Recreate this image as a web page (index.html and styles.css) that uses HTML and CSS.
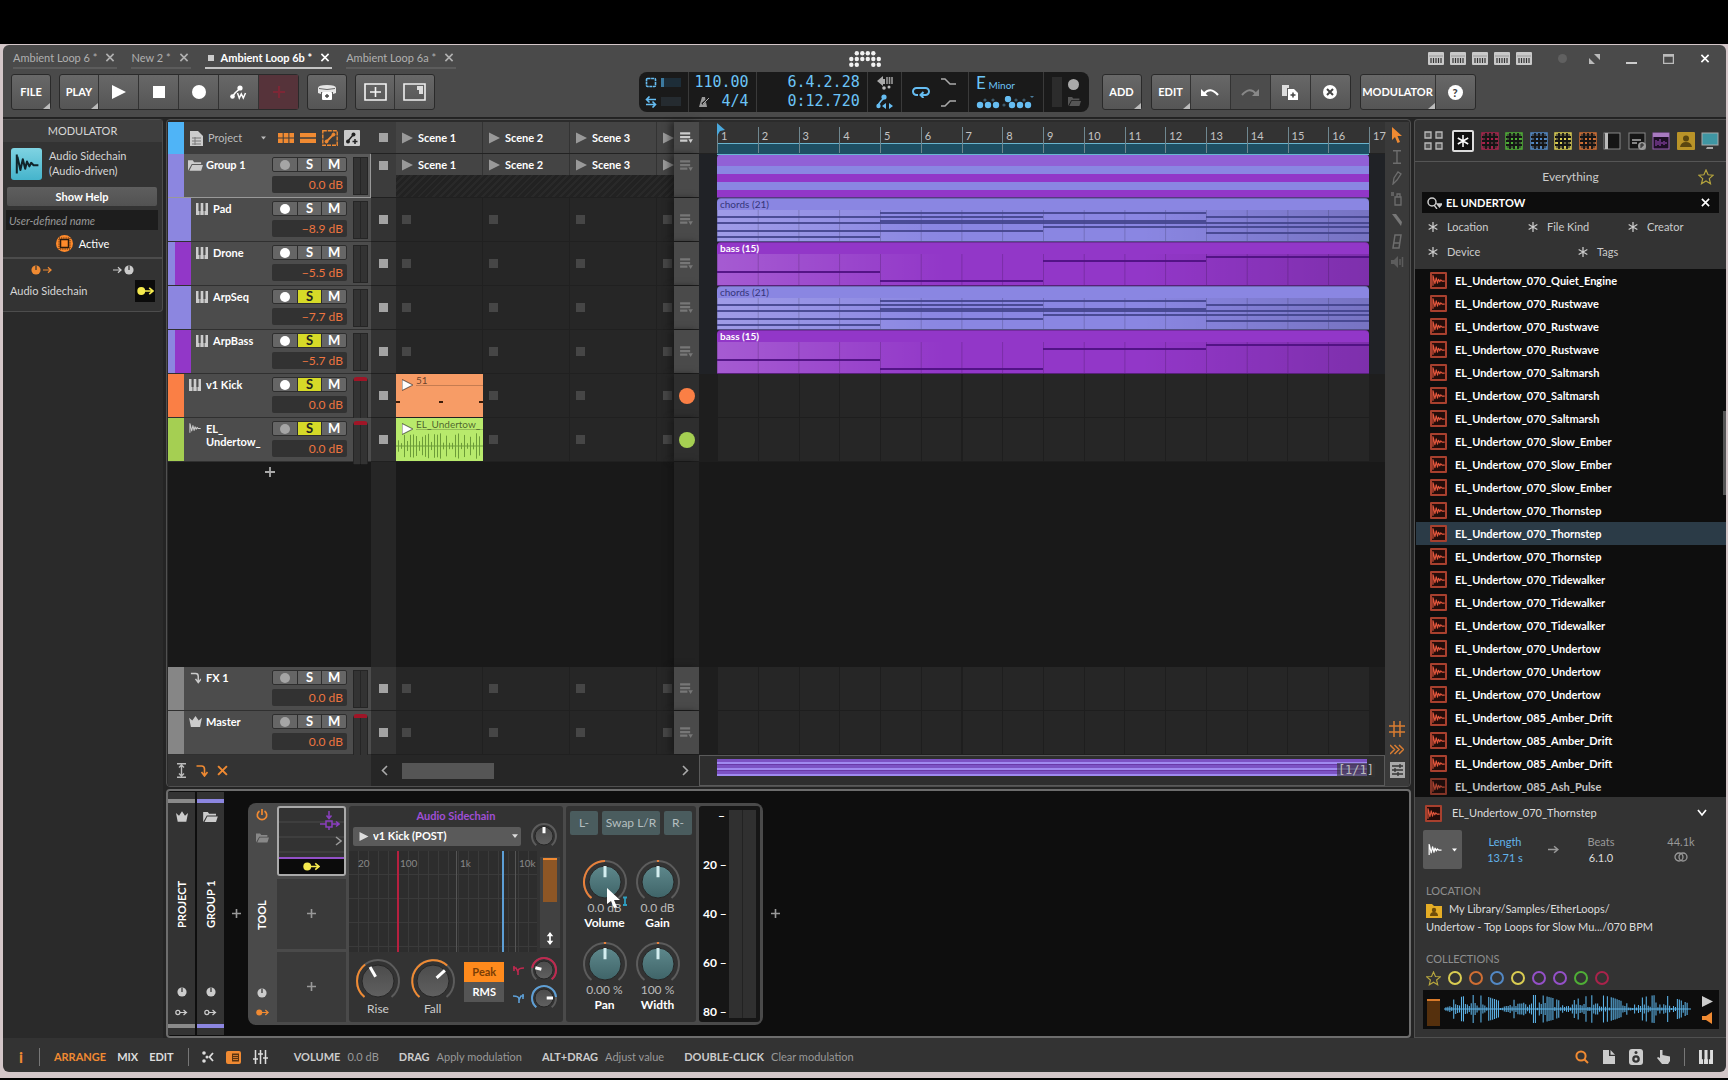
FILE: index.html
```html
<!DOCTYPE html>
<html lang="en">
<head>
<meta charset="utf-8">
<title>Ambient Loop 6b</title>
<link rel="stylesheet" href="styles.css">
</head>
<body>
<svg class="defs" aria-hidden="true">
  <symbol id="i-x" viewBox="0 0 10 10"><path d="M1 1l8 8M9 1L1 9" fill="none" stroke="currentColor" stroke-width="1.8"/></symbol>
  <symbol id="i-play" viewBox="0 0 10 10"><path d="M0 0l10 5-10 5z" fill="currentColor"/></symbol>
  <symbol id="i-plus" viewBox="0 0 10 10"><path d="M5 0v10M0 5h10" fill="none" stroke="currentColor" stroke-width="1.8"/></symbol>
  <symbol id="i-keys" viewBox="0 0 12 12"><path d="M0 0h2.500v8h-2.500zM4.700 0h2.600v8H4.700zM9.500 0H12v8H9.500zM0 8h3.500v4H0zM4.300 8h3.400v4H4.300zM8.500 8H12v4H8.500z" fill="currentColor"/></symbol>
  <symbol id="i-midi" viewBox="0 0 16 13"><rect width="16" height="13" rx="1" fill="#c9c9c9"/><path d="M3 6v5M5.500 6v5M8 6v5M10.500 6v5M13 6v5" stroke="#333" stroke-width="1.200"/><path d="M1 4h14" stroke="#999"/></symbol>
  <symbol id="i-wave" viewBox="0 0 20 16"><path d="M1.500 0v16M2 2l2.500 11L6.500 4l2 8 1.500-6 2 4 1.500-3 2 2h4" fill="none" stroke="currentColor" stroke-width="1.700" stroke-linejoin="round"/></symbol>
  <symbol id="i-folder" viewBox="0 0 16 12"><path d="M0 12V1h5l1.500 2H14v2H4z M1.500 12L4.500 6H16l-2 6z" fill="currentColor"/></symbol>
  <symbol id="i-crown" viewBox="0 0 14 12"><path d="M0 2l3.500 3L7 0l3.500 5L14 2l-2 10H2z" fill="currentColor"/></symbol>
  <symbol id="i-send" viewBox="0 0 12 12"><path d="M1 1h5q3 0 3 3v6M6 7l3 4 3-4" fill="none" stroke="currentColor" stroke-width="1.600"/></symbol>
  <symbol id="i-list" viewBox="0 0 14 12"><path d="M0 1.500h11M0 5.500h11M0 9.500h8" stroke="currentColor" stroke-width="2.400"/><path d="M9 8h5l-2.500 4z" fill="currentColor"/></symbol>
  <symbol id="i-route" viewBox="0 0 16 8"><circle cx="4" cy="4" r="3.700" fill="currentColor"/><path d="M7 4h8M11.500 1l3.500 3-3.500 3" fill="none" stroke="currentColor" stroke-width="1.500"/></symbol>
  <symbol id="i-route-open" viewBox="0 0 16 8"><circle cx="3.500" cy="4" r="2.500" fill="none" stroke="currentColor" stroke-width="1.500"/><path d="M6 4h9M10.500 1l3.500 3-3.500 3" fill="none" stroke="currentColor" stroke-width="1.500"/></symbol>
  <symbol id="i-dial" viewBox="0 0 12 12"><circle cx="6" cy="6" r="5.500" fill="currentColor"/><path d="M6 1v5" stroke="#333" stroke-width="1.500"/></symbol>
  <symbol id="i-arrow" viewBox="0 0 10 8"><path d="M0 4h9M5.500 1L9 4 5.500 7" fill="none" stroke="currentColor" stroke-width="1.300"/></symbol>
  <symbol id="i-ast" viewBox="0 0 12 12"><path d="M6 0v12M.8 3l10.400 6M.8 9l10.400-6" stroke="currentColor" stroke-width="1.500"/></symbol>
  <symbol id="i-star" viewBox="0 0 16 16"><path d="M8 1l2.100 4.800 5.100.4-3.900 3.400 1.200 5.100L8 12l-4.500 2.700 1.200-5.100L.8 6.200l5.100-.4z" fill="none" stroke="currentColor" stroke-width="1.200"/></symbol>
  <symbol id="i-caret" viewBox="0 0 8 5"><path d="M0 0h8L4 5z" fill="currentColor"/></symbol>
  <symbol id="i-grid" viewBox="0 0 18 18"><rect x="1" y="1" width="16" height="16" fill="currentColor" fill-opacity=".3" stroke="currentColor" stroke-width="1.500"/><path d="M5 1v16M9 1v16M13 1v16M1 5h16M1 9h16M1 13h16" stroke="#151515" stroke-width="1.800"/><g fill="currentColor"><rect x="6" y="6" width="2" height="2"/><rect x="10" y="6" width="2" height="2"/><rect x="6" y="10" width="2" height="2"/><rect x="14" y="6" width="2" height="2"/><rect x="10" y="14" width="2" height="2"/><rect x="2" y="10" width="2" height="2"/></g></symbol>
  <symbol id="i-power" viewBox="0 0 12 12"><path d="M6 0v6M3.500 2a4.700 4.700 0 1 0 5 0" fill="none" stroke="currentColor" stroke-width="1.700"/></symbol>
  <symbol id="i-updown" viewBox="0 0 8 14"><path d="M4 3v8" stroke="currentColor" stroke-width="1.800"/><path d="M4 0L.5 4.500h7zM4 14L.5 9.500h7z" fill="currentColor"/></symbol>
</svg>

<div class="app">
  <header class="tabs">
    <nav class="tab-list" aria-label="Projects">
      <div class="tab"><a href="#">Ambient Loop 6 *</a><button aria-label="Close"><svg width="10" height="9"><use href="#i-x"/></svg></button></div>
      <div class="tab"><a href="#">New 2 *</a><button aria-label="Close"><svg width="10" height="9"><use href="#i-x"/></svg></button></div>
      <div class="tab active"><i class="dirty"></i><a href="#">Ambient Loop 6b *</a><button aria-label="Close"><svg width="10" height="9"><use href="#i-x"/></svg></button></div>
      <div class="tab"><a href="#">Ambient Loop 6a *</a><button aria-label="Close"><svg width="10" height="9"><use href="#i-x"/></svg></button></div>
    </nav>
    <svg class="logo" width="32" height="16" viewBox="0 0 32 16" fill="#f2f2f2"><g id="logo-dots"></g></svg>
    <div class="win">
      <div class="midi"><svg width="16" height="13"><use href="#i-midi"/></svg><svg width="16" height="13"><use href="#i-midi"/></svg><svg width="16" height="13"><use href="#i-midi"/></svg><svg width="16" height="13"><use href="#i-midi"/></svg><svg width="16" height="13"><use href="#i-midi"/></svg></div>
      <i class="led"></i>
      <button aria-label="Full screen"><svg width="11" height="10" viewBox="0 0 11 10" fill="#bbb"><path d="M5 0h6v6zM0 4v6h6z"/></svg></button>
      <button aria-label="Minimize"><svg width="11" height="10" viewBox="0 0 11 10"><path d="M0 9h11" stroke="#ccc" stroke-width="2"/></svg></button>
      <button aria-label="Maximize"><svg width="11" height="10" viewBox="0 0 11 10" fill="none" stroke="#bbb"><path d="M.5.5h10v9H.5zM0 2h11" stroke-width="1.500"/></svg></button>
      <button aria-label="Close window" class="white"><svg width="10" height="9"><use href="#i-x"/></svg></button>
    </div>
  </header>

  <div class="toolbar">
    <div class="tools-left">
      <div class="bgroup"><button class="menu">FILE</button></div>
      <div class="bgroup">
        <button class="menu">PLAY</button>
        <button aria-label="Play"><svg width="14" height="14"><use href="#i-play"/></svg></button>
        <button aria-label="Stop"><svg width="12" height="12"><rect width="12" height="12" fill="#fff"/></svg></button>
        <button aria-label="Record"><svg width="14" height="14"><circle cx="7" cy="7" r="7" fill="#fff"/></svg></button>
        <button aria-label="Automation write"><svg width="17" height="15" viewBox="0 0 17 15"><path d="M2.500 11.500L5 8l5-4.500" fill="none" stroke="#fff" stroke-width="1.600"/><circle cx="2.500" cy="11.500" r="2.300" fill="#fff"/><circle cx="10" cy="3" r="2.600" fill="#fff"/><path d="M7.500 8l1.800 5 2-4 2 4L15.500 8" fill="none" stroke="#fff" stroke-width="1.500"/></svg></button>
        <button class="overdub" aria-label="Overdub"><svg width="12" height="12"><use href="#i-plus"/></svg></button>
      </div>
      <div class="bgroup"><button aria-label="Save"><svg width="20" height="17" viewBox="0 0 20 17"><path d="M1 4q0-3 9-3t9 3v5l-3 1V8H4v2L1 9z" fill="#e6e6e6"/><path d="M2 4.500q8 2 16 0" stroke="#666" fill="none"/><rect x="5" y="8" width="10" height="8" rx="1" fill="#fff"/><path d="M10 10v4M8 12h4" stroke="#444" stroke-width="1.300"/></svg></button></div>
      <div class="bgroup">
        <button aria-label="Add panel"><svg width="23" height="18" viewBox="0 0 23 18" fill="none" stroke="#f4f4f4" stroke-width="1.600"><path d="M1 1h21v16H1zM11.500 4v10M6 9h11"/></svg></button>
        <button aria-label="Panel layout"><svg width="23" height="18" viewBox="0 0 23 18" fill="none" stroke="#eee" stroke-width="1.600"><path d="M1 1h21v16H1z"/><path d="M14 3h6v8h-4V7h-2z" fill="#ddd" stroke="none"/></svg></button>
      </div>
    </div>

    <section class="transport" aria-label="Transport">
      <div class="cell t-io">
        <span><svg width="12" height="11" viewBox="0 0 12 11"><rect x="1.500" y="1.500" width="9" height="8" rx="1" fill="none" stroke="#66bdf2" stroke-width="1.600" stroke-dasharray="3 .6"/></svg><i class="bar"></i></span>
        <span><svg width="12" height="12" viewBox="0 0 12 12" fill="none" stroke="#66bdf2" stroke-width="1.600"><path d="M1 3.500h10M4.500.5L1.500 3.500l3 3M11 8.500H1M7.500 5.500l3 3-3 3"/></svg><i class="bar off"></i></span>
      </div>
      <div class="cell t-tempo"><b>110.00</b><b><svg width="11" height="10" viewBox="0 0 11 10"><path d="M3 0h3l2 10H0z" fill="#9a9a9a"/><path d="M3 7l7-6" stroke="#1a1a1a" stroke-width="2"/><path d="M4 7l6-6" stroke="#aaa"/></svg>4/4</b></div>
      <div class="cell t-pos"><b>6.4.2.28</b><b>0:12.720</b></div>
      <div class="cell t-follow">
        <svg width="16" height="14" viewBox="0 0 16 14"><path d="M0 5l6-5v10zM6 3h2v5H6z" fill="#aaa"/><path d="M10 1v7M12.500 1v7M15 1v7" stroke="#999" stroke-width="1.600"/><circle cx="7" cy="12" r="1.800" fill="#bbb"/><circle cx="12" cy="11" r="1.500" fill="#bbb"/></svg>
        <svg width="17" height="15" viewBox="0 0 17 15" fill="#66bdf2"><path d="M2 11l3-4 4-4" stroke="#66bdf2" stroke-width="1.600" fill="none"/><circle cx="2.500" cy="12" r="2.200"/><circle cx="8" cy="3" r="2.600"/><path d="M6 12l4-3v6zM17 12l-4-3v6z"/></svg>
      </div>
      <div class="cell t-loop">
        <svg width="18" height="12" viewBox="0 0 18 12" fill="none" stroke="#66bdf2" stroke-width="2"><path d="M6 9H4.500a3.500 3.500 0 0 1 0-7h9a3.500 3.500 0 0 1 0 7H9M11.500 6L8.500 9l3 3"/></svg>
        <div><svg width="15" height="8" viewBox="0 0 15 8" fill="none" stroke="#aaa" stroke-width="1.500"><path d="M0 1h4l5 5h6"/></svg><svg width="15" height="8" viewBox="0 0 15 8" fill="none" stroke="#aaa" stroke-width="1.500"><path d="M0 7h4l5-5h6"/></svg></div>
      </div>
      <div class="cell t-key"><p><strong>E</strong> Minor</p><svg width="58" height="13" viewBox="0 0 58 13"><g id="scale-dots"></g><path d="M54 0h4l-2 2z" fill="#4a7c9c"/></svg></div>
      <div class="cell t-cpu"><i></i><div><em></em><svg width="13" height="10"><use href="#i-folder"/></svg></div></div>
    </section>

    <div class="tools-right">
      <div class="bgroup"><button class="menu">ADD</button></div>
      <div class="bgroup">
        <button class="menu">EDIT</button>
        <button aria-label="Undo"><svg width="18" height="12" viewBox="0 0 18 12"><path d="M3 8q6-8 14 1" fill="none" stroke="#fff" stroke-width="2.200"/><path d="M0 3v7h7z" fill="#fff"/></svg></button>
        <button class="dim" aria-label="Redo"><svg width="18" height="12" viewBox="0 0 18 12"><path d="M15 8Q9 0 1 9" fill="none" stroke="#888" stroke-width="2"/><path d="M18 3v7h-7z" fill="#888"/></svg></button>
        <button aria-label="Duplicate"><svg width="16" height="15" viewBox="0 0 16 15"><path d="M0 0h7v3H5v8H0z" fill="#ddd"/><path d="M6 4h6l4 4v7H6z" fill="#fff"/><path d="M11 7.500v5M8.500 10h5" stroke="#444" stroke-width="1.500"/></svg></button>
        <button aria-label="Delete"><svg width="14" height="14" viewBox="0 0 14 14"><circle cx="7" cy="7" r="7" fill="#fff"/><path d="M4 4l6 6M10 4l-6 6" stroke="#444" stroke-width="2"/></svg></button>
      </div>
      <div class="bgroup"><button class="menu wide">MODULATOR</button><button class="help" aria-label="Help"><span>?</span></button></div>
    </div>
  </div>

  <main class="workspace">
    <aside class="left">
      <section class="inspector">
        <h2>MODULATOR</h2>
        <div class="mod-head"><span class="mod-icon"><svg width="24" height="22"><use href="#i-wave"/></svg></span><p>Audio Sidechain<br>(Audio-driven)</p></div>
        <button class="show-help">Show Help</button>
        <input class="user-name" type="text" placeholder="User-defined name" aria-label="User-defined name">
        <button class="active-btn"><svg width="17" height="17" viewBox="0 0 17 17"><circle cx="8.500" cy="8.500" r="8.500" fill="#ff8a2b"/><rect x="4.500" y="4.500" width="8" height="8" fill="#ff8a2b" stroke="#2b1a0c" stroke-width="1.500"/><rect x="3" y="3" width="11" height="11" fill="none" stroke="#2b1a0c" stroke-dasharray="1 1.200"/></svg>Active</button>
        <div class="mod-io"><span class="or"><svg width="10" height="10"><use href="#i-dial"/></svg><svg width="9" height="8"><use href="#i-arrow"/></svg></span><span><svg width="9" height="8"><use href="#i-arrow"/></svg><svg width="10" height="10"><use href="#i-dial"/></svg></span></div>
        <div class="mod-src"><span>Audio Sidechain</span><button aria-label="Route"><svg width="17" height="10"><use href="#i-route"/></svg></button></div>
      </section>
    </aside>

    <div class="center">
      <section class="arrange" aria-label="Arranger">
        <div class="heads" id="heads">
          <div class="head-top">
            <i class="swatch"></i>
            <svg width="13" height="15" viewBox="0 0 13 15"><path d="M0 0h8l5 5v10H0z" fill="#ccc"/><path d="M2 7h9M2 10h9M2 13h9M5 6v8" stroke="#777"/></svg>
            <button class="proj">Project</button><svg class="dim" width="5" height="4"><use href="#i-caret"/></svg>
            <span class="views">
              <svg width="16" height="10" viewBox="0 0 16 10" fill="#f08a32"><path d="M0 0h4.700v4.500H0zM5.700 0h4.700v4.500H5.700zM11.400 0h4.600v4.500h-4.600zM0 5.500h4.700V10H0zM5.700 5.500h4.700V10H5.700zM11.400 5.500h4.600V10h-4.600z"/></svg>
              <svg width="16" height="10" viewBox="0 0 16 10" fill="#f08a32"><path d="M0 0h16v4.300H0zM0 5.700h16V10H0z"/></svg>
              <svg width="16" height="16" viewBox="0 0 16 16" fill="none" stroke="#f08a32"><rect x=".8" y=".8" width="14.400" height="14.400" stroke-width="1.400" stroke-dasharray="4 1"/><path d="M4 12l7-7" stroke-width="1.800"/><circle cx="4.500" cy="11.500" r="1.500" fill="#f08a32"/><circle cx="11.500" cy="4.500" r="1.500" fill="#f08a32"/></svg>
              <svg width="16" height="16" viewBox="0 0 16 16"><rect width="16" height="16" rx="1" fill="#ccc"/><path d="M4 11l5-6M11 9v5M8.500 11.500h5" stroke="#222" stroke-width="1.500"/><circle cx="4" cy="11.500" r="2" fill="#222"/><circle cx="9.500" cy="4.500" r="2" fill="#222"/></svg>
            </span>
          </div>
        </div>
        <div class="launcher" id="launcher"></div>
        <div class="timeline" id="timeline"></div>
        <div class="edit-tools">
          <svg width="12" height="16" viewBox="0 0 12 16"><path d="M1 0v13l3-3 2.500 6L9 15 6.500 9H11z" fill="#f08a32"/></svg>
          <svg width="8" height="14" viewBox="0 0 8 14"><path d="M0 .7h8M0 13.300h8M4 1v12" stroke="#6d6d6d" stroke-width="1.400"/></svg>
          <svg width="10" height="14" viewBox="0 0 10 14"><path d="M1 13l1-6 4-6 3 2-4 6z" fill="none" stroke="#6d6d6d" stroke-width="1.300"/></svg>
          <svg width="12" height="14" viewBox="0 0 12 14"><path d="M4 5h6v8H4zM6 5V2h3v3M0 1h3M0 3h3" fill="none" stroke="#6d6d6d" stroke-width="1.300"/></svg>
          <svg width="12" height="14" viewBox="0 0 12 14"><path d="M1 1l4 0 6 8-1 4z" fill="#777"/></svg>
          <svg width="10" height="15" viewBox="0 0 10 15"><path d="M3 1h6l-2 13H1zM2 9h6" fill="none" stroke="#6d6d6d" stroke-width="1.500"/></svg>
          <svg width="13" height="12" viewBox="0 0 13 12"><path d="M0 4h3l4-4v12L3 8H0z" fill="#5c5c5c"/><path d="M9 3v6M11.500 1v10" stroke="#5c5c5c" stroke-width="1.500"/></svg>
          <span class="spacer"></span>
          <svg width="16" height="16" viewBox="0 0 16 16"><path d="M5 0v16M11 0v16M0 5h16M0 11h16" stroke="#d97d32" stroke-width="1.500"/></svg>
          <svg width="14" height="11" viewBox="0 0 14 11"><path d="M0 1l4.500 4.500L0 10M4.500 1L9 5.500 4.500 10M9 1l4.500 4.500L9 10" fill="none" stroke="#d97d32" stroke-width="1.500"/></svg>
          <svg width="15" height="16" viewBox="0 0 15 16"><rect width="15" height="16" fill="#a9a9a9"/><path d="M2 4h11M2 8h11M2 12h11M10 2v4M5 6v4M8 10v4" stroke="#333" stroke-width="1.300"/></svg>
        </div>
      </section>

      <section class="devices" aria-label="Devices">
        <div class="strip grey"><svg width="12" height="11"><use href="#i-crown"/></svg><b>PROJECT</b><svg width="10" height="10"><use href="#i-dial"/></svg><svg width="13" height="7"><use href="#i-route-open"/></svg></div>
        <div class="strip lilac"><svg width="15" height="11"><use href="#i-folder"/></svg><b>GROUP 1</b><svg width="10" height="10"><use href="#i-dial"/></svg><svg width="13" height="7"><use href="#i-route-open"/></svg></div>
        <button class="add" aria-label="Insert device"><svg width="9" height="9"><use href="#i-plus"/></svg></button>
        <div class="device">
          <div class="dev-side"><svg class="or" width="12" height="12"><use href="#i-power"/></svg><svg class="fold" width="13" height="11"><use href="#i-folder"/></svg><b>TOOL</b><svg width="10" height="10"><use href="#i-dial"/></svg><svg class="or" width="13" height="7"><use href="#i-route"/></svg></div>
          <div class="mods">
            <div class="mod-cell sel">
              <svg width="20" height="20" viewBox="0 0 20 20" fill="none" stroke="#8b3fc0" stroke-width="1.500"><rect x="6" y="10" width="6" height="6"/><path d="M9 0v7M6.500 4.500L9 7.500l2.500-3M0 13h6M12 13h7M16 10.500l3 2.500-3 2.500M9 16v3"/></svg>
              <svg width="7" height="10" viewBox="0 0 7 10"><path d="M1 1l5 4-5 4" fill="none" stroke="#999" stroke-width="1.500"/></svg>
              <span><svg width="17" height="9"><use href="#i-route"/></svg></span>
            </div>
            <button class="mod-cell" aria-label="Add modulator"><svg width="9" height="9"><use href="#i-plus"/></svg></button>
            <button class="mod-cell" aria-label="Add modulator"><svg width="9" height="9"><use href="#i-plus"/></svg></button>
          </div>
          <div class="sidechain">
            <h3>Audio Sidechain</h3>
            <div class="sc-src">
              <label class="select"><svg width="10" height="9"><use href="#i-play"/></svg><select aria-label="Source"><option>v1 Kick (POST)</option></select><svg width="6" height="4"><use href="#i-caret"/></svg></label>
              <span class="knob sm" data-size="28" data-angle="0" data-name="Amount"></span>
            </div>
            <div class="sc-graph"><div class="graph"><span>20</span><span>100</span><span>1k</span><span>10k</span></div><div class="slot"><i></i><svg width="8" height="13"><use href="#i-updown"/></svg></div></div>
            <div class="sc-knobs">
              <div class="kf"><span class="knob" data-size="46" data-angle="-30" data-arc="-140 -38" data-color="#f08a32" data-name="Rise"></span><em>Rise</em></div>
              <div class="kf"><span class="knob" data-size="46" data-angle="48" data-arc="-140 42" data-color="#f08a32" data-name="Fall"></span><em>Fall</em></div>
              <div class="mode"><button class="on">Peak</button><button>RMS</button></div>
              <div class="filters">
                <div><svg width="11" height="9" viewBox="0 0 11 9" fill="none" stroke="#c0284f" stroke-width="1.600"><path d="M0 2h3l2 4M5 9V5q0-3 6-3M1 0v5"/></svg><span class="knob" data-size="28" data-angle="-75" data-arc="-80 140" data-color="#c0284f" data-name="Low cut"></span></div>
                <div><svg width="11" height="9" viewBox="0 0 11 9" fill="none" stroke="#5d9fd6" stroke-width="1.600"><path d="M11 2H8L6 6M6 9V5Q6 2 0 2M10 0v5"/></svg><span class="knob" data-size="28" data-angle="90" data-arc="-140 85" data-color="#5d9fd6" data-name="High cut"></span></div>
              </div>
            </div>
          </div>
          <div class="tool">
            <div class="swap"><button>L-</button><button>Swap L/R</button><button>R-</button></div>
            <div class="tool-knobs">
              <div class="kf teal"><span class="knob" data-size="46" data-angle="0" data-arc="-140 0" data-color="#e8803a" data-fill="teal" data-name="Volume"></span><i>0.0 dB</i><em>Volume</em>
                <svg class="pointer" width="24" height="22" viewBox="0 0 24 22"><path d="M0 0v16l4-3 3 7 3-1-3-7h6z" fill="#fff"/><path d="M18 9v8M16 9.500h4M16 17h4" stroke="#2f9fc0" stroke-width="1.800" fill="none"/></svg></div>
              <div class="kf teal"><span class="knob" data-size="46" data-angle="0" data-arc="-3 3" data-color="#e8803a" data-fill="teal" data-name="Gain"></span><i>0.0 dB</i><em>Gain</em></div>
              <div class="kf teal"><span class="knob" data-size="46" data-angle="0" data-arc="-3 3" data-color="#e8803a" data-fill="teal" data-name="Pan"></span><i>0.00 %</i><em>Pan</em></div>
              <div class="kf teal"><span class="knob" data-size="46" data-angle="0" data-arc="-3 3" data-color="#e8803a" data-fill="teal" data-name="Width"></span><i>100 %</i><em>Width</em></div>
            </div>
          </div>
          <div class="vu"><div class="scale"><b>–</b><b>20 –</b><b>40 –</b><b>60 –</b><b>80 –</b></div><i></i></div>
        </div>
        <button class="add" aria-label="Append device"><svg width="9" height="9"><use href="#i-plus"/></svg></button>
      </section>
    </div>

    <aside class="browser">
      <div class="cats">
        <svg class="grid4" width="19" height="19" viewBox="0 0 19 19" fill="#555" stroke="#bbb" stroke-width="1.300"><path d="M1 1h6v6H1zM12 1h6v6h-6zM1 12h6v6H1zM12 12h6v6h-6z"/></svg>
        <button class="all" aria-label="Everything"><svg width="12" height="12"><use href="#i-ast"/></svg></button>
        <svg class="c-red" width="18" height="18"><use href="#i-grid"/></svg>
        <svg class="c-green" width="18" height="18"><use href="#i-grid"/></svg>
        <svg class="c-blue" width="18" height="18"><use href="#i-grid"/></svg>
        <svg class="c-yellow" width="18" height="18"><use href="#i-grid"/></svg>
        <svg class="c-orange" width="18" height="18"><use href="#i-grid"/></svg>
        <svg width="18" height="18" viewBox="0 0 18 18"><rect x="1" y="1" width="16" height="16" fill="#151515" stroke="#888"/><path d="M2 1h3v16H2z" fill="#bbb"/></svg>
        <svg width="18" height="18" viewBox="0 0 18 18"><rect x="1" y="1" width="16" height="16" fill="#151515" stroke="#888"/><path d="M4 8h9M4 11h5" stroke="#aaa" stroke-width="1.500"/><circle cx="14" cy="14" r="4" fill="#999"/><path d="M13 16v-4h2v2h-2" fill="none" stroke="#222"/></svg>
        <svg width="18" height="18" viewBox="0 0 18 18"><rect x="1" y="1" width="16" height="16" fill="#1d0f24" stroke="#9a5fb5"/><path d="M1 1h16v4H1z" fill="#a87ac0"/><path d="M4 8v6M6 9v4M8 7v7M10 10v2M12 9v4M14 10v2" stroke="#a34ec4"/></svg>
        <svg width="18" height="18" viewBox="0 0 18 18"><rect width="18" height="18" rx="1" fill="#b99328"/><circle cx="9" cy="6.500" r="3" fill="#5a4610"/><path d="M3 15q1-5 6-5t6 5z" fill="#5a4610"/></svg>
        <svg width="18" height="18" viewBox="0 0 18 18"><rect x="1" y="1" width="16" height="12" fill="#3f96a3" stroke="#aaa"/><path d="M6 15h6v2H5z" fill="#aaa"/></svg>
      </div>
      <div class="b-title"><span>Everything</span><svg width="16" height="16"><use href="#i-star"/></svg></div>
      <label class="search"><svg width="15" height="12" viewBox="0 0 15 12"><circle cx="5" cy="5" r="4" fill="none" stroke="#ccc" stroke-width="1.500"/><path d="M7 8l3 4M10 7h5l-2.500 3z" stroke="#ccc" stroke-width="1.300" fill="#ccc"/></svg><input type="text" value="EL UNDERTOW" aria-label="Search"><button aria-label="Clear search"><svg width="9" height="9"><use href="#i-x"/></svg></button></label>
      <div class="filt"><button><svg width="10" height="10"><use href="#i-ast"/></svg>Location</button><button><svg width="10" height="10"><use href="#i-ast"/></svg>File Kind</button><button><svg width="10" height="10"><use href="#i-ast"/></svg>Creator</button></div>
      <div class="filt two"><button><svg width="10" height="10"><use href="#i-ast"/></svg>Device</button><button><svg width="10" height="10"><use href="#i-ast"/></svg>Tags</button></div>
      <div class="results"><ul id="results"></ul><i class="thumb"></i></div>
      <section class="info">
        <div class="info-title"><span class="file"><svg width="13" height="11"><use href="#i-wave"/></svg></span><h3>EL_Undertow_070_Thornstep</h3><svg width="10" height="8" viewBox="0 0 10 8"><path d="M1 1l4 5 4-5" fill="none" stroke="#fff" stroke-width="1.700"/></svg></div>
        <div class="info-meta">
          <button aria-label="Sample mode"><svg width="14" height="11"><use href="#i-wave"/></svg><svg width="5" height="4"><use href="#i-caret"/></svg></button>
          <p class="blue">Length<br>13.71 s</p><svg class="ar" width="11" height="9"><use href="#i-arrow"/></svg><p><span>Beats</span><br>6.1.0</p><p><span>44.1k</span><br><svg width="14" height="10" viewBox="0 0 14 10" fill="none" stroke="#999" stroke-width="1.300"><circle cx="5" cy="5" r="4"/><circle cx="9" cy="5" r="4"/></svg></p>
        </div>
        <h4>LOCATION</h4>
        <p class="path"><svg width="16" height="15" viewBox="0 0 16 15"><path d="M0 1h6l2 2h8v12H0z" fill="#e5ad26"/><circle cx="8" cy="7" r="2.200" fill="#6e4c0a"/><path d="M4 13q0-4 4-4t4 4z" fill="#6e4c0a"/></svg><a href="#">My Library</a>/<a href="#">Samples</a>/<a href="#">EtherLoops</a>/<br><a href="#">Undertow - Top Loops for Slow Mu...</a>/<a href="#">070 BPM</a></p>
        <h4>COLLECTIONS</h4>
        <div class="colls"><svg width="15" height="15"><use href="#i-star"/></svg><button class="c-yellow" aria-label="Yellow"></button><button class="c-orange" aria-label="Orange"></button><button class="c-blue" aria-label="Blue"></button><button class="c-yellow" aria-label="Lemon"></button><button class="c-violet" aria-label="Violet"></button><button class="c-violet" aria-label="Purple"></button><button class="c-green" aria-label="Green"></button><button class="c-red" aria-label="Red"></button></div>
        <div class="preview"><i></i><svg id="preview" viewBox="0 0 254 30" preserveAspectRatio="none"></svg><div><button aria-label="Play preview"><svg width="11" height="11"><use href="#i-play"/></svg></button><button class="or" aria-label="Preview volume"><svg width="10" height="12" viewBox="0 0 10 12"><path d="M0 4h4l6-4v12L4 8H0z" fill="currentColor"/></svg></button></div></div>
      </section>
    </aside>
  </main>

  <footer class="status">
    <button class="or info-i" aria-label="Info">i</button><i class="div"></i>
    <nav><a class="or" href="#">ARRANGE</a><a href="#">MIX</a><a href="#">EDIT</a></nav><i class="div"></i>
    <div class="panels">
      <svg width="12" height="12" viewBox="0 0 12 12" fill="#ddd"><circle cx="2" cy="2" r="1.800"/><circle cx="2" cy="10" r="1.800"/><circle cx="5" cy="6" r="1.500"/><path d="M11 2L7.500 6 11 10" stroke="#ddd" stroke-width="1.800" fill="none"/></svg>
      <svg width="15" height="13" viewBox="0 0 15 13"><rect width="15" height="13" rx="2" fill="#f08a32"/><path d="M6 2.500h7v8H6z" fill="#5a3310"/><path d="M7 4.500h5M7 6.500h5M7 8.500h5" stroke="#f08a32" stroke-width=".8"/></svg>
      <svg width="15" height="14" viewBox="0 0 15 14" stroke="#ddd" stroke-width="1.500"><path d="M2.500 0v14M7.500 0v14M12.500 0v14M0 9h5M5 4h5M10 8h5"/></svg>
    </div>
    <p><b>VOLUME</b>0.0 dB</p><p><b>DRAG</b>Apply modulation</p><p><b>ALT+DRAG</b>Adjust value</p><p><b>DOUBLE-CLICK</b>Clear modulation</p>
    <div class="st-right">
      <svg class="or" width="14" height="14" viewBox="0 0 14 14" fill="none" stroke="currentColor" stroke-width="2"><circle cx="6" cy="6" r="4.600"/><path d="M9.500 9.500L13 13"/></svg>
      <svg width="12" height="14" viewBox="0 0 12 14" fill="#ccc"><path d="M0 0h6v6h6v8H0z"/><path d="M7.500 0L12 4.800H7.500z"/></svg>
      <svg width="14" height="16" viewBox="0 0 14 16"><rect width="14" height="16" rx="3" fill="#ccc"/><circle cx="7" cy="10" r="3.800" fill="#333"/><circle cx="7" cy="10" r="1.500" fill="#ccc"/><circle cx="7" cy="3.500" r="1.500" fill="#333"/></svg>
      <svg width="13" height="14" viewBox="0 0 13 14" fill="#ccc"><path d="M3 0h2.500v5L13 6.500V11l-2 3H5L0 8l1-1 2 1z"/></svg>
      <i class="div"></i>
      <svg class="keys" width="14" height="14"><use href="#i-keys"/></svg>
    </div>
  </footer>
</div>
<script src="app.js"></script>
</body>
</html>
```

FILE: styles.css
```css
* { box-sizing: border-box; }
body { margin: 0; background: #000; color: #d6d6d6; font: 11px/16px Lato, "Open Sans", sans-serif; }
h2, h3, h4, p, ul { margin: 0; padding: 0; font-weight: 400; font-size: 11px; }
a { color: inherit; text-decoration: none; }
em, i { font-style: normal; }
svg { display: block; flex: none; }
button, input, select { font: inherit; color: inherit; border: 0; margin: 0; padding: 0; background: none; }
button { display: flex; align-items: center; justify-content: center; }
.defs { position: absolute; width: 0; height: 0; }
.or { color: #f08a32; }
.spacer { flex: 1; }
.c-red { color: #a9234b; }
.c-green { color: #4fae36; }
.c-blue { color: #5288c4; }
.c-yellow { color: #d9cc52; }
.c-orange { color: #cf6e33; }
.c-violet { color: #9450c8; }

.app { display: flex; flex-direction: column; height: 100vh; min-height: 900px; border: solid #000; border-width: 44px 0 2px; padding: 1px 2px 6px 3px; background: #d3c6c8; }
.tabs, .toolbar { display: grid; grid-template-columns: 1fr auto 1fr; background: #4a4a4a; }
.tabs { height: 27px; border-radius: 6px 6px 0 0; align-items: center; padding: 0 10px; }
.tab-list { display: flex; gap: 14px; }
.tab { display: flex; align-items: center; gap: 8px; color: #b0b0b0; border-bottom: 2px solid #5c5c5c; height: 20px; padding-right: 2px; }
.tab.active { color: #fff; border-color: #c4c4c4; padding-left: 3px; font-weight: 700; }
.tab.active .dirty { margin-right: -1px; }
.tab a { white-space: nowrap; }
.dirty { width: 6px; height: 6px; background: #ccc; }
.win { display: flex; align-items: center; justify-content: flex-end; gap: 26px; padding-right: 6px; }
.midi { display: flex; gap: 6px; }
.led { width: 9px; height: 9px; border-radius: 50%; background: #606060; margin-right: -4px; }
.white { color: #fff; }

.toolbar { height: 46px; padding: 0 10px 5px 8px; align-items: center; border-bottom: 1px solid #222; }
.tools-left, .tools-right { display: flex; gap: 8px; }
.tools-right { padding-left: 13px; gap: 9px; }
.bgroup { display: flex; height: 36px; border: 1px solid #2a2a2a; border-radius: 3px; background: linear-gradient(#686868, #555); }
.bgroup button { width: 39px; font-weight: 700; color: #fff; position: relative; border-left: 1px solid #333; box-sizing: content-box; }
.bgroup button:first-child { border-left: 0; width: 38px; }
.menu::after { content: ""; position: absolute; right: 0; bottom: 0; border-left: 7px solid transparent; border-bottom: 6px solid #bbb; }
.bgroup .menu.wide { width: 74px; }
.bgroup .overdub { background: #56333a; color: #7d2736; }
.bgroup .dim { background: #4c4c4c; }
.help span { width: 15px; height: 15px; border-radius: 50%; background: #fff; color: #444; font-weight: 900; line-height: 15px; }

.transport { display: flex; height: 40px; background: #1a1a1a; border-radius: 8px; width: 450px; color: #6cc4f7; }
.cell { border-right: 1px solid #3a3a3a; display: flex; }
.cell:last-child { border: 0; }
.transport b { font: 15px/19px "DejaVu Sans Mono", monospace; display: flex; justify-content: flex-end; align-items: center; gap: 12px; }
.t-io, .t-tempo, .t-pos, .t-follow { flex-direction: column; justify-content: center; }
.t-io { width: 51px; padding-left: 6px; gap: 8px; }
.t-io span { display: flex; gap: 4px; align-items: center; }
.bar { width: 20px; height: 9px; background: #1d2d38; border-left: 3px solid #3c7aa0; }
.bar.off { border: 0; background: #252b30; }
.t-tempo { width: 68px; padding-right: 7px; }
.t-pos { width: 112px; padding-right: 7px; }
.t-follow { width: 35px; align-items: center; gap: 4px; }
.t-loop { width: 67px; align-items: center; justify-content: space-between; padding: 0 12px 0 10px; }
.t-loop div { display: grid; gap: 13px; }
.t-key { width: 75px; flex-direction: column; justify-content: center; padding-left: 7px; gap: 3px; }
.t-key p { font-size: 10px; line-height: 16px; }
.t-key strong { font-size: 17px; font-weight: 400; }
.t-cpu { padding: 5px 8px; gap: 6px; color: #555; }
.t-cpu > i { width: 10px; background: #2c2c2c; }
.t-cpu div { display: grid; gap: 6px; align-content: center; }
.t-cpu em { width: 11px; height: 11px; border-radius: 50%; background: #aaa; }

.workspace { flex: 1; min-height: 0; display: grid; grid-template-columns: 160px minmax(0, 1fr) 312px; gap: 4px 3px; background: #242424; padding-top: 1px; }
.left { background: #2a2a2a; }
.inspector { background: #333; border: 1px solid #4d4d4d; border-left: 0; border-radius: 0 4px 4px 0; height: 193px; display: flex; flex-direction: column; }
.inspector h2 { text-align: center; background: #3e3e3e; line-height: 22px; }
.mod-head { display: flex; gap: 7px; padding: 6px 8px 0; line-height: 15px; font-size: 12px; }
.mod-icon { width: 31px; height: 32px; border-radius: 3px; background: linear-gradient(#7fd3e2, #45b4cc); color: #10242a; display: grid; place-items: center; }
.show-help { margin: 7px 5px 4px 4px; height: 19px; background: linear-gradient(#5e5e5e, #525252); border-radius: 2px; color: #fff; font-weight: 700; }
.user-name { margin: 0 4px 0 3px; height: 20px; background: #1d1d1d; padding-left: 3px; font-style: italic; }
.user-name::placeholder { color: #999; opacity: 1; }
.active-btn { height: 29px; gap: 6px; color: #fff; border-bottom: 2px solid #4c4c4c; }
.mod-io { display: flex; justify-content: space-between; padding: 6px 28px 5px; color: #ccc; }
.mod-io span { display: flex; align-items: center; gap: 2px; }
.mod-src { display: flex; justify-content: space-between; align-items: center; padding: 0 7px; }
.mod-src button { background: #0b0b0b; width: 20px; height: 22px; color: #f5ea4e; }

.center { display: flex; flex-direction: column; gap: 2px; min-width: 0; }
.arrange { flex: 1; min-height: 0; border: 1px solid #505050; border-radius: 4px; background: #2b2b2b; padding: 2px 1px 0; display: grid; grid-template-columns: 203px 328px minmax(0, 1fr) 24px; }
.heads, .launcher, .timeline { display: flex; flex-direction: column; min-width: 0; min-height: 0; background: #191919; }
.head-top, .scene-top, .ruler { height: 32px; flex: none; }
.head-top { display: flex; align-items: center; background: #3c3c3c; color: #bbb; }
.swatch { width: 16px; align-self: stretch; background: #4fb4f7; margin-right: 6px; }
.proj { margin: 0 19px 0 5px; }
.views { display: flex; gap: 6px; align-items: center; margin-left: 12px; }
.trk { height: 44px; flex: none; display: flex; background: #4c4c4c; border-bottom: 1px solid #303030; padding-right: 3px; }
.trk .in { width: 7px; background: #8c86e0; }
.trk .col { width: 16px; margin-right: 4px; }
.trk.sel { background: #5a5a5a; border: 1px solid #999; border-width: 0 1px 1px 0; padding-right: 2px; }
.trk .ic { width: 14px; padding-top: 5px; color: #ccc; margin-right: 4px; display: flex; justify-content: center; }
.trk .nm { flex: 1; padding-top: 4px; line-height: 13px; color: #fff; font-weight: 700; overflow-wrap: anywhere; white-space: pre-line; }
.trk .ct { width: 75px; padding-top: 3px; margin-right: 6px; }
.smr { display: flex; height: 15px; background: #666; border: 1px solid #2e2e2e; border-radius: 2px; }
.smr button { flex: 1; color: #fff; font-weight: 700; font-size: 13px; border-left: 1px solid #2e2e2e; line-height: 13px; }
.smr button:first-child { border: 0; }
.smr .rec::before { content: ""; width: 10px; height: 10px; border-radius: 50%; background: #fff; }
.smr .rec.off::before { background: #a5a5a5; }
.smr .solo { background: #d6da28; color: #222; }
.db { height: 17px; margin-top: 4px; background: #323232; color: #ee7540; text-align: right; padding-right: 4px; font-size: 12px; line-height: 17px; border-radius: 2px; }
.mtr { width: 15px; margin: 3px 0 2px; background: linear-gradient(90deg, #333 6px, #252525 6px 7px, #333 7px); border: 1px solid #252525; }
.mtr.clip { border-top: 4px solid #a01527; }
.add-track { height: 20px; color: #aaa; width: 100%; }
.foot { height: 31px; flex: none; display: flex; align-items: center; gap: 9px; padding-left: 9px; background: #333; }

.lrow { height: 44px; flex: none; display: flex; border-bottom: 1px solid #202020; background: #262626; }
.lrow > * { flex: none; }
.stop { width: 25px; background: #333; display: grid; place-items: center; }
.stop i { width: 9px; height: 9px; background: #a3a3a3; }
.slot-c { width: 87px; border-right: 1px solid #202020; display: flex; align-items: center; padding-left: 6px; }
.slot-c i { width: 9px; height: 9px; background: #464646; }
.slot-c.last, .scene.last { width: 17px; border: 0; overflow: hidden; }
.out { width: 25px; background: #4a4a4a; color: #777; display: grid; place-items: center; box-shadow: -4px 0 6px #1118; }
.out.dark { background: #2e2e2e; }
.out em { width: 16px; height: 16px; border-radius: 50%; }
.scene { width: 87px; background: #444; border-right: 1px solid #333; display: flex; gap: 5px; justify-content: flex-start; padding-left: 6px; color: #999; }
.scene span { color: #fff; font-weight: 700; }
.scene-top { display: flex; border-bottom: 1px solid #222; }
.scene-top .stop, .lrow.grp .stop { background: #3c3c3c; }
.scene-top .out { color: #ccc; }
.scene-top > * { flex: none; }
.lrow.grp { background: repeating-linear-gradient(135deg, #222 0 3px, #292929 3px 5px); }
.lrow.grp .scene { height: 21px; }
.lrow.grp .stop, .lrow.grp .out { padding-bottom: 20px; }
.clip-l { width: 87px; color: #0009; display: grid; grid-template: 12px 1fr / 20px 1fr; font-size: 10px; line-height: 12px; overflow: hidden; }
.clip-l b { grid-column: 2; font-weight: 400; border-bottom: 1px solid #0003; }
.clip-l .pl { grid-column: 1; grid-row: 1; color: #fff; margin: 5px 0 0 6px; stroke: #0008; overflow: visible; z-index: 1; }
.clip-l .body { grid-column: 1 / 3; width: 100%; height: 31px; }
.lfill { flex: 1; display: flex; }
.lfill .stop { background: #262626; }
.lfill .out { background: #222; margin-left: auto; }
.scroll { height: 31px; flex: none; background: #262626; display: flex; align-items: center; color: #aaa; padding: 0 10px; }
.scroll i { width: 92px; height: 16px; background: #555; margin-left: 14px; }
.scroll svg:last-child { margin-left: auto; }

.ruler { background: #333; padding: 0 16px 0 18px; position: relative; display: grid; grid-template-columns: repeat(16, 1fr) 0; border-bottom: 1px solid #222; }
.ruler span { border-left: 1px solid #6f8790; margin-top: 5px; padding-left: 3px; line-height: 18px; color: #c4c4c4; z-index: 1; }
.ruler::after { content: ""; position: absolute; left: 18px; right: 16px; top: 21px; height: 10px; background: #1d4f63; border: solid #69b5cf; border-width: 1px 0; }
.ruler svg { position: absolute; left: 18px; top: 1px; z-index: 2; }
.arow { height: 44px; flex: none; padding: 0 16px 0 18px; background: #202226; }
.arow.empty { background: #1e1e1e; }
.arow.empty .bars { height: 44px; }
.bars { background: #262626 repeating-linear-gradient(90deg, #1e1e1e 0 1px, transparent 1px calc(100% / 16)); border-bottom: 1px solid #1e1e1e; }
.clip { height: 44px; border-radius: 4px 4px 0 0; border-top: 1px solid #0003; border-bottom: 1px solid #0006; font-size: 10px; line-height: 11px; }
.clip b { display: block; padding-left: 3px; font-weight: 400; height: 11px; }
.clip svg { width: 100%; height: 31px; }
.clip.lil { background: #8a86e2; color: #35357a; }
.clip.pur { background: #9237c8; color: #fff; }
.clip.pur b { font-weight: 700; }
.clip.group { background: linear-gradient(#9160d6 11px, #8a86e2 11px 19px, #9237c8 19px 27px, #8a86e2 27px 35px, #9237c8 35px); }
.afill { flex: 1; }
.mini { height: 31px; flex: none; border: 1px solid #5a5a5a; background: #2e2e2e; padding: 3px 17px 0; color: #bbb; font: 12px/16px "DejaVu Sans Mono", monospace; }
.mini div { height: 17px; background: repeating-linear-gradient(#7c52c4 0 3px, #a08af0 3px 5px, #6a3aa8 5px 6px); text-align: right; line-height: 22px; }
.mini span { background: #34343499; padding: 0 1px; margin-right: -8px; }
.edit-tools { background: #3a3a3a; display: flex; flex-direction: column; align-items: center; gap: 7px; padding: 5px 0 8px; }

.devices { height: 249px; flex: none; border: 2px solid #6d6d6d; border-radius: 4px; background: #0e0e0e; display: flex; align-items: center; gap: 2px; overflow: hidden; }
.strip { width: 27px; align-self: stretch; margin: 1px 0; background: #333; display: flex; flex-direction: column; align-items: center; gap: 12px; padding: 7px 0; color: #ccc; }
.strip::before, .strip::after { content: ""; width: 100%; height: 4px; background: #8a8a8a; flex: none; }
.strip.lilac::before, .strip.lilac::after { background: #8c86e0; }
.strip::after { margin-top: -4px; }
.strip::before { margin-bottom: -4px; }
.strip b, .dev-side b { flex: 1; writing-mode: vertical-rl; transform: rotate(180deg); text-align: center; color: #fff; line-height: 16px; }
.add { width: 20px; color: #999; }
.device { height: 222px; background: #4a4a4a; border-radius: 8px; padding: 3px 3px 3px 2px; display: flex; gap: 3px; }
.dev-side { width: 24px; display: flex; flex-direction: column; align-items: center; gap: 11px; padding: 3px 0 6px; color: #ccc; }
.dev-side .or { color: #f08a32; }
.dev-side .fold { color: #888; }
.mods { width: 69px; display: grid; grid-template-rows: repeat(3, 1fr); gap: 3px; }
.mod-cell { background: #3a3a3a; color: #999; width: 100%; }
.mod-cell.sel { border: 2px solid #aaa; border-radius: 3px; background: repeating-linear-gradient(#333 0 13px, #3e3e3e 13px 15px); display: flex; flex-direction: column; align-items: flex-end; gap: 5px; padding-top: 3px; overflow: hidden; }
.mod-cell.sel > svg:first-child { margin-right: 4px; }
.mod-cell.sel > svg { margin-right: 2px; }
.mod-cell.sel span { width: 100%; margin-top: auto; height: 17px; flex: none; border-top: 2px solid #9250c8; background: #0b0b0b; color: #f5ea4e; display: grid; place-items: center; }
.sidechain { width: 214px; background: #333; border-radius: 3px; display: flex; flex-direction: column; }
.sidechain h3 { color: #a04fd6; text-align: center; padding-top: 1px; line-height: 17px; font-weight: 700; }
.sc-src { display: flex; align-items: center; justify-content: space-between; padding: 0 5px 0 4px; height: 25px; }
.select { width: 168px; height: 19px; background: #5a5a5a; border-radius: 2px; display: flex; align-items: center; gap: 4px; padding: 0 3px 0 6px; color: #ddd; }
.select select { flex: 1; appearance: none; color: #fff; font-weight: 700; }
.sc-graph { display: flex; height: 103px; justify-content: space-between; padding-right: 3px; }
.graph { width: 188px; margin-top: 2px; background: linear-gradient(90deg, transparent 48px, #b5203f 48px 50px, transparent 50px 153px, #5d9fd6 153px 155px, transparent 155px), linear-gradient(90deg, transparent 107px, #555 107px 108px, transparent 108px 166px, #555 166px 167px, transparent 167px), repeating-linear-gradient(90deg, transparent 0 9px, #3a3a3a 9px 10px), repeating-linear-gradient(transparent 0 23px, #3a3a3a 23px 24px), #2d2d2d; font-size: 10px; color: #888; display: grid; grid-template-columns: 42px 60px 59px 1fr; padding: 4px 0 0 9px; }
.slot { width: 20px; margin: 8px 0 4px; background: #414141; display: flex; flex-direction: column; align-items: center; justify-content: space-between; padding: 1px 0 3px; color: #fff; }
.slot i { width: 14px; height: 44px; background: #8d5625; border-top: 2px solid #f08a32; }
.sc-knobs { display: flex; align-items: center; padding: 6px 5px 0 6px; justify-content: space-between; }
.kf { display: grid; justify-items: center; font-size: 12px; line-height: 14px; position: relative; }
.kf em { color: #ccc; margin-top: -2px; }
.knob { display: block; position: relative; }
.knob input { position: absolute; inset: 0; width: 100%; height: 100%; opacity: 0; }
.mode { width: 40px; margin-top: -9px; }
.mode button { width: 100%; height: 20px; background: #555; color: #fff; font-weight: 700; }
.mode .on { background: #ff8a1c; color: #7a3d06; }
.filters { display: grid; margin-top: -5px; }
.filters div { display: flex; align-items: center; gap: 6px; }
.tool { width: 130px; background: #333; border-radius: 3px; padding: 5px 4px; }
.swap { display: flex; justify-content: space-between; }
.swap button { height: 24px; padding: 0 4px; min-width: 28px; background: #4a5c5e; color: #b5bfc0; border-radius: 2px; font-size: 12px; }
.tool-knobs { display: grid; grid-template-columns: 53px 53px; justify-content: center; row-gap: 11px; padding-top: 24px; }
.teal i { color: #bbb; margin-top: -4px; }
.teal em { color: #fff; font-weight: 700; margin-top: 1px; }
.pointer { position: absolute; left: 29px; top: 29px; }
.vu { width: 61px; background: #161616; border-radius: 3px; display: flex; justify-content: space-between; padding: 4px; gap: 4px; }
.scale { display: flex; flex-direction: column; justify-content: space-between; text-align: right; color: #fff; width: 22px; white-space: nowrap; font-size: 12px; margin: -2px 0; }
.vu > i { width: 28px; background: linear-gradient(90deg, #303030 13px, #222 13px 14px, #303030 14px); }

.browser { background: #333; border: 1px solid #505050; border-right: 0; border-radius: 4px 0 0 0; display: flex; flex-direction: column; min-height: 0; min-width: 0; }
.cats { height: 42px; flex: none; border-bottom: 1px solid #555; display: flex; align-items: center; justify-content: space-between; padding: 0 7px 0 9px; }
.grid4 { margin-right: 3px; }
.all { width: 22px; height: 22px; background: #111; border: 2px solid #ddd; border-radius: 2px; color: #fff; }
.b-title { display: flex; align-items: center; height: 30px; padding: 0 12px 0 28px; color: #ccc; font-size: 12px; }
.b-title span { flex: 1; text-align: center; }
.b-title svg, .colls > svg { color: #b7a63e; }
.search { display: flex; align-items: center; margin: 0 7px; height: 21px; flex: none; background: #0d0d0d; padding: 0 9px 0 5px; gap: 4px; color: #fff; }
.search input { flex: 1; min-width: 0; font-weight: 700; }
.filt { display: grid; grid-template-columns: 100px 100px 1fr; padding: 0 0 0 13px; height: 27px; flex: none; color: #ccc; }
.filt.two { grid-template-columns: 150px 1fr; height: 29px; padding-bottom: 6px; }
.filt button { justify-content: flex-start; gap: 9px; }
.results { flex: 1; min-height: 0; background: #0e0e0e; overflow: hidden; position: relative; }
.results ul { list-style: none; }
.results li { height: 23px; display: flex; align-items: center; gap: 8px; padding-left: 14px; margin-left: 1px; color: #fff; font-weight: 700; }
.results li.on { background: #2b3b47; }
.results li:last-child { opacity: .75; }
.thumb { position: absolute; right: 0; top: 142px; width: 3px; height: 84px; background: #555; }
.file { width: 17px; height: 17px; border: 2px solid #a8402e; background: #240d0a; color: #e4573d; display: grid; place-items: center; border-radius: 1px; }
.info { flex: none; padding: 6px 7px 8px 8px; }
.info-title { display: flex; align-items: center; gap: 10px; height: 20px; padding: 0 12px 0 2px; }
.info-title h3 { flex: 1; color: #ddd; }
.info-meta { display: grid; grid-template-columns: 39px 86px 11px 84px 1fr; align-items: center; text-align: center; height: 39px; margin: 7px 0 14px; color: #999; }
.info-meta button { height: 39px; background: #5a5a5a; color: #fff; gap: 10px; border-radius: 2px; }
.info-meta p { color: #ddd; }
.info-meta p svg { margin: 2px auto 0; display: inline-block; }
.info-meta span { color: #999; }
.info-meta .blue { color: #62b4ec; }
h4 { color: #8f8f8f; padding: 0 3px; }
.path { padding: 1px 3px 16px; line-height: 17px; color: #ddd; }
.path svg { display: inline-block; vertical-align: middle; margin-right: 7px; }
.colls { display: flex; gap: 7px; padding: 2px 3px 0; align-items: center; height: 20px; }
.colls button { width: 14px; height: 14px; border: 2px solid currentColor; border-radius: 50%; }
.preview { display: flex; margin-top: 3px; height: 39px; background: #0d0d0d; padding: 4px; gap: 4px; }
.preview > i { width: 13px; background: #55300d; border-top: 2px solid #d87a2a; margin: 5px 0 0; height: 27px; }
.preview > svg { flex: 1; min-width: 0; height: 30px; }
.preview div { width: 16px; display: grid; gap: 5px; place-content: center; color: #ccc; margin-left: 4px; }
.preview .or { color: #f08a32; }

.status { height: 34px; flex: none; background: #333; border-radius: 0 0 6px 6px; display: flex; align-items: center; padding: 4px 13px 0 16px; color: #999; }
.status .div { width: 1px; height: 18px; background: #777; }
.info-i { font-weight: 900; font-size: 15px; padding: 0 16px 0 0; }
.status nav { display: flex; gap: 11px; padding: 0 14px; color: #ddd; font-weight: 700; }
.status nav .or { color: #f08a32; }
.panels { display: flex; gap: 12px; align-items: center; margin: 0 26px 0 13px; }
.status p { margin-right: 20px; }
.status p b { color: #ccc; margin-right: 7px; }
.st-right { margin-left: auto; display: flex; align-items: center; gap: 14px; }
.keys { color: #ddd; }
```

FILE: app.js
```js
const use = (id, w, h, cls = '') => `<svg class="${cls}" width="${w}" height="${h}"><use href="#i-${id}"/></svg>`;
const byId = id => document.getElementById(id);

let seed = 7;
const rnd = () => (seed = (seed * 16807) % 2147483647) / 2147483647;

const LILAC = '#8c86e0', PURPLE = '#9237c8';
const tracks = [
  { name: 'Group 1', icon: ['folder', 15, 12], color: LILAC, db: '0.0 dB', group: true, off: true },
  { name: 'Pad', icon: ['keys', 12, 12], color: LILAC, db: '−8.9 dB', child: true, clip: 'chords' },
  { name: 'Drone', icon: ['keys', 12, 12], color: PURPLE, db: '−5.5 dB', child: true, clip: 'bass' },
  { name: 'ArpSeq', icon: ['keys', 12, 12], color: LILAC, db: '−7.7 dB', child: true, solo: true, clip: 'chords' },
  { name: 'ArpBass', icon: ['keys', 12, 12], color: PURPLE, db: '−5.7 dB', child: true, solo: true, clip: 'bass' },
  { name: 'v1 Kick', icon: ['keys', 12, 12], color: '#fa7f45', db: '0.0 dB', solo: true, hot: true, launch: 'kick' },
  { name: 'EL_\nUndertow_', icon: ['wave', 12, 10], color: '#a5cf52', db: '0.0 dB', solo: true, hot: true, off: true, launch: 'audio' },
  null,
  { name: 'FX 1', icon: ['send', 11, 12], color: '#868686', db: '0.0 dB', off: true },
  { name: 'Master', icon: ['crown', 13, 11], color: '#868686', db: '0.0 dB', off: true, hot: true }
];

const head = t => `<div class="trk ${t.group ? 'sel' : ''}">${t.child ? '<i class="in"></i>' : ''}
  <i class="col" style="background:${t.color}"></i><span class="ic">${use(...t.icon)}</span><span class="nm">${t.name}</span>
  <div class="ct"><div class="smr"><button class="rec ${t.off ? 'off' : ''}" aria-label="Record arm"></button><button class="${t.solo ? 'solo' : ''}">S</button><button>M</button></div>
  <div class="db">${t.db}</div></div><i class="mtr ${t.hot ? 'clip' : ''}"></i></div>`;

const scenes = () => ['Scene 1', 'Scene 2', 'Scene 3', ''].map((s, i) =>
  `<button class="scene ${i === 3 ? 'last' : ''}" aria-label="${s || 'Scene 4'}">${use('play', 11, 12)}${s ? `<span>${s}</span>` : ''}</button>`).join('');

function launchClip(kind) {
  const kick = kind === 'kick';
  let d = '';
  if (kick) d = 'M0 16h4M43 16h4M83 16h4';
  else {
    d = 'M0 16h87';
    for (let x = 2; x < 86; x += 3) { const h = rnd() > .5 ? 9 + rnd() * 4 : 2 + rnd() * 4; d += `M${x}.500 ${16 - h}v${2 * h}`; }
  }
  return `<div class="clip-l" style="background:${kick ? '#f79c66' : '#b8ea6c'}">${use('play', 11, 12, 'pl')}<b>${kick ? '51' : 'EL_Undertow_'}</b>
    <svg class="body" viewBox="0 0 87 31" preserveAspectRatio="none"><path d="${d}" stroke="${kick ? '#3c1c0a' : '#6c9c38'}" stroke-width="${kick ? 2 : 1}"/></svg></div>`;
}

function launchRow(t) {
  if (t.group) return `<div class="lrow grp"><div class="stop"><i></i></div>${scenes()}<div class="out">${use('list', 13, 11)}</div></div>`;
  const slot = '<div class="slot-c"><i></i></div>';
  const out = t.launch ? `<div class="out dark"><em style="background:${t.color}"></em></div>` : `<div class="out">${use('list', 13, 11)}</div>`;
  return `<div class="lrow"><div class="stop"><i></i></div>${t.launch ? launchClip(t.launch) : slot}${slot}${slot}<div class="slot-c last"><i></i></div>${out}</div>`;
}

/* Notes of each four-bar section: [y, thickness] */
const notes = {
  chords: [[[6, 1], [12, 1], [20, 1], [26, 1]], [[2, 1], [6, 1], [10, 3], [20, 1]], [[2, 1], [10, 3], [16, 1]], [[6, 1], [12, 1], [16, 1], [22, 1]]],
  bass: [[[17, 1]], [[26, 1]], [[6, 1]], [[2, 1]]]
};
function arrangeClip(kind) {
  const chords = kind === 'chords';
  let s = '';
  for (let i = 0; i < 16; i++) s += `<rect x="${i * 100}" y="0" width="2" height="31" fill="#000" opacity=".2"/>`;
  notes[kind].forEach((n, i) => n.forEach(([y, h]) => {
    s += `<rect x="${i * 400}" y="${y}" width="400" height="${h + 1}" fill="${chords ? '#42448c' : '#4d1080'}" opacity=".9"/>`;
  }));
  const shade = '<defs><linearGradient id="sh"><stop offset="0" stop-color="#fff" stop-opacity=".18"/><stop offset=".35" stop-color="#fff" stop-opacity="0"/><stop offset=".65" stop-opacity="0"/><stop offset="1" stop-opacity=".14"/></linearGradient></defs><rect width="1600" height="31" fill="url(#sh)"/>';
  return `<div class="clip ${chords ? 'lil' : 'pur'}"><b>${chords ? 'chords (21)' : 'bass (15)'}</b><svg viewBox="0 0 1600 31" preserveAspectRatio="none">${shade}${s}</svg></div>`;
}
const arrangeRow = t => t.group ? '<div class="arow"><div class="clip group"></div></div>'
  : t.clip ? `<div class="arow">${arrangeClip(t.clip)}</div>`
  : '<div class="arow empty"><div class="bars"></div></div>';

byId('heads').insertAdjacentHTML('beforeend', tracks.map(t => t ? head(t) :
  `<button class="add-track" aria-label="Add track">${use('plus', 10, 10)}</button><div class="spacer"></div>`).join('') +
  `<div class="foot"><svg width="9" height="15" viewBox="0 0 9 15" fill="none" stroke="#bbb" stroke-width="1.400"><path d="M0 .7h9M0 14.300h9M4.500 2v11M2 4.500L4.500 2 7 4.500M2 10.500L4.500 13 7 10.500"/></svg><span class="or">${use('send', 13, 12)}</span><span class="or">${use('x', 11, 11)}</span></div>`);

byId('launcher').innerHTML = `<div class="scene-top"><div class="stop"><i></i></div>${scenes()}<div class="out">${use('list', 13, 11)}</div></div>` +
  tracks.map(t => t ? launchRow(t) : '<div class="lfill"><div class="stop"></div><div class="out"></div></div>').join('') +
  `<div class="scroll"><svg width="7" height="11" viewBox="0 0 7 11"><path d="M6 1L1.500 5.500 6 10" fill="none" stroke="#aaa" stroke-width="1.600"/></svg><i></i><svg width="7" height="11" viewBox="0 0 7 11"><path d="M1 1l4.500 4.500L1 10" fill="none" stroke="#aaa" stroke-width="1.600"/></svg></div>`;

byId('timeline').innerHTML = `<div class="ruler">${Array.from({ length: 17 }, (_, i) => `<span>${i + 1}</span>`).join('')}<svg width="8" height="13"><path d="M0 0l8 7-5 1-3 5z" fill="#4aa8dc"/></svg></div>` +
  tracks.map(t => t ? arrangeRow(t) : '<div class="afill"></div>').join('') +
  '<div class="mini"><div><span>[1/1]</span></div></div>';

/* Rotary knobs; angles are degrees from twelve o'clock */
document.querySelectorAll('.knob').forEach(k => {
  const { size, angle, arc, color, fill, name } = k.dataset;
  const s = +size, c = s / 2, r = c - 2, sw = 2, body = s > 30 ? r - 5 : r - 3;
  const pt = (a, q) => [c + q * Math.sin(a * Math.PI / 180), c - q * Math.cos(a * Math.PI / 180)].map(n => n.toFixed(1)).join(' ');
  const path = (a, b, col) => `<path d="M${pt(a, r)}A${r} ${r} 0 ${b - a > 180 ? 1 : 0} 1 ${pt(b, r)}" fill="none" stroke="${col}" stroke-width="${sw}"/>`;
  const teal = fill === 'teal', id = 'k' + name.replace(' ', '');
  k.innerHTML = `<svg width="${s}" height="${s}"><defs><linearGradient id="${id}" x2="0" y2="1"><stop stop-color="${teal ? '#5e888c' : '#4c4c4c'}"/><stop offset="1" stop-color="${teal ? '#3f6468' : '#606060'}"/></linearGradient></defs>
    ${path(-140, 140, '#5c5c5c')}${arc ? path(...arc.split(' ').map(Number), color) : ''}
    <circle cx="${c}" cy="${c}" r="${body}" fill="url(#${id})" stroke="#262626"/>
    <path d="M${pt(+angle, body * .3)}L${pt(+angle, body)}" stroke="${teal ? '#d3eef0' : '#fff'}" stroke-width="3"/></svg><input type="range" min="-140" max="140" value="${angle}" aria-label="${name}">`;
});

const names = ['070_Quiet_Engine', ...['070_Rustwave', '070_Saltmarsh', '070_Slow_Ember', '070_Thornstep', '070_Tidewalker', '070_Undertow', '085_Amber_Drift'].flatMap(n => [n, n, n]), '085_Ash_Pulse'];
byId('results').innerHTML = names.map((n, i) => `<li class="${i === 11 ? 'on' : ''}"><span class="file">${use('wave', 13, 11)}</span>EL_Undertow_${n}</li>`).join('');

let wave = 'M0 15h254';
for (let x = 2; x < 252; x += 2) {
  const env = .4 + .6 * Math.abs(Math.sin(x / 20));
  const h = rnd() > .65 ? 14 * env : 1 + rnd() * 6 * env;
  wave += `M${x} ${(15 - h).toFixed(1)}v${(2 * h).toFixed(1)}`;
}
byId('preview').innerHTML = `<path d="${wave}" stroke="#5cb2e6" stroke-width="1.100"/>`;

/* Dot matrix logo: columns lit in each of the three rows */
const logo = [[1, 2, 3, 4], [0, 1, 2, 3, 4, 5], [0, 1, 4, 5]];
byId('logo-dots').innerHTML = logo.map((row, y) => row.map(x => `<circle cx="${2.300 + x * 5.500}" cy="${2.300 + y * 5.700}" r="2.200"/>`).join('')).join('');
const keys = [[4, 9, 1], [9, 4, 0], [12, 9, 1], [17, 4, 0], [20, 9, 1], [28, 9, 0], [32, 3, 1], [36, 9, 1], [40, 4, 0], [44, 9, 1], [48, 4, 0], [52, 9, 1]];
byId('scale-dots').innerHTML = keys.map(([x, y, on]) => `<circle cx="${x}" cy="${y}" r="${on ? 3.200 : 1.600}" fill="${on ? '#66bdf2' : '#3d5a6b'}"/>`).join('');
```
